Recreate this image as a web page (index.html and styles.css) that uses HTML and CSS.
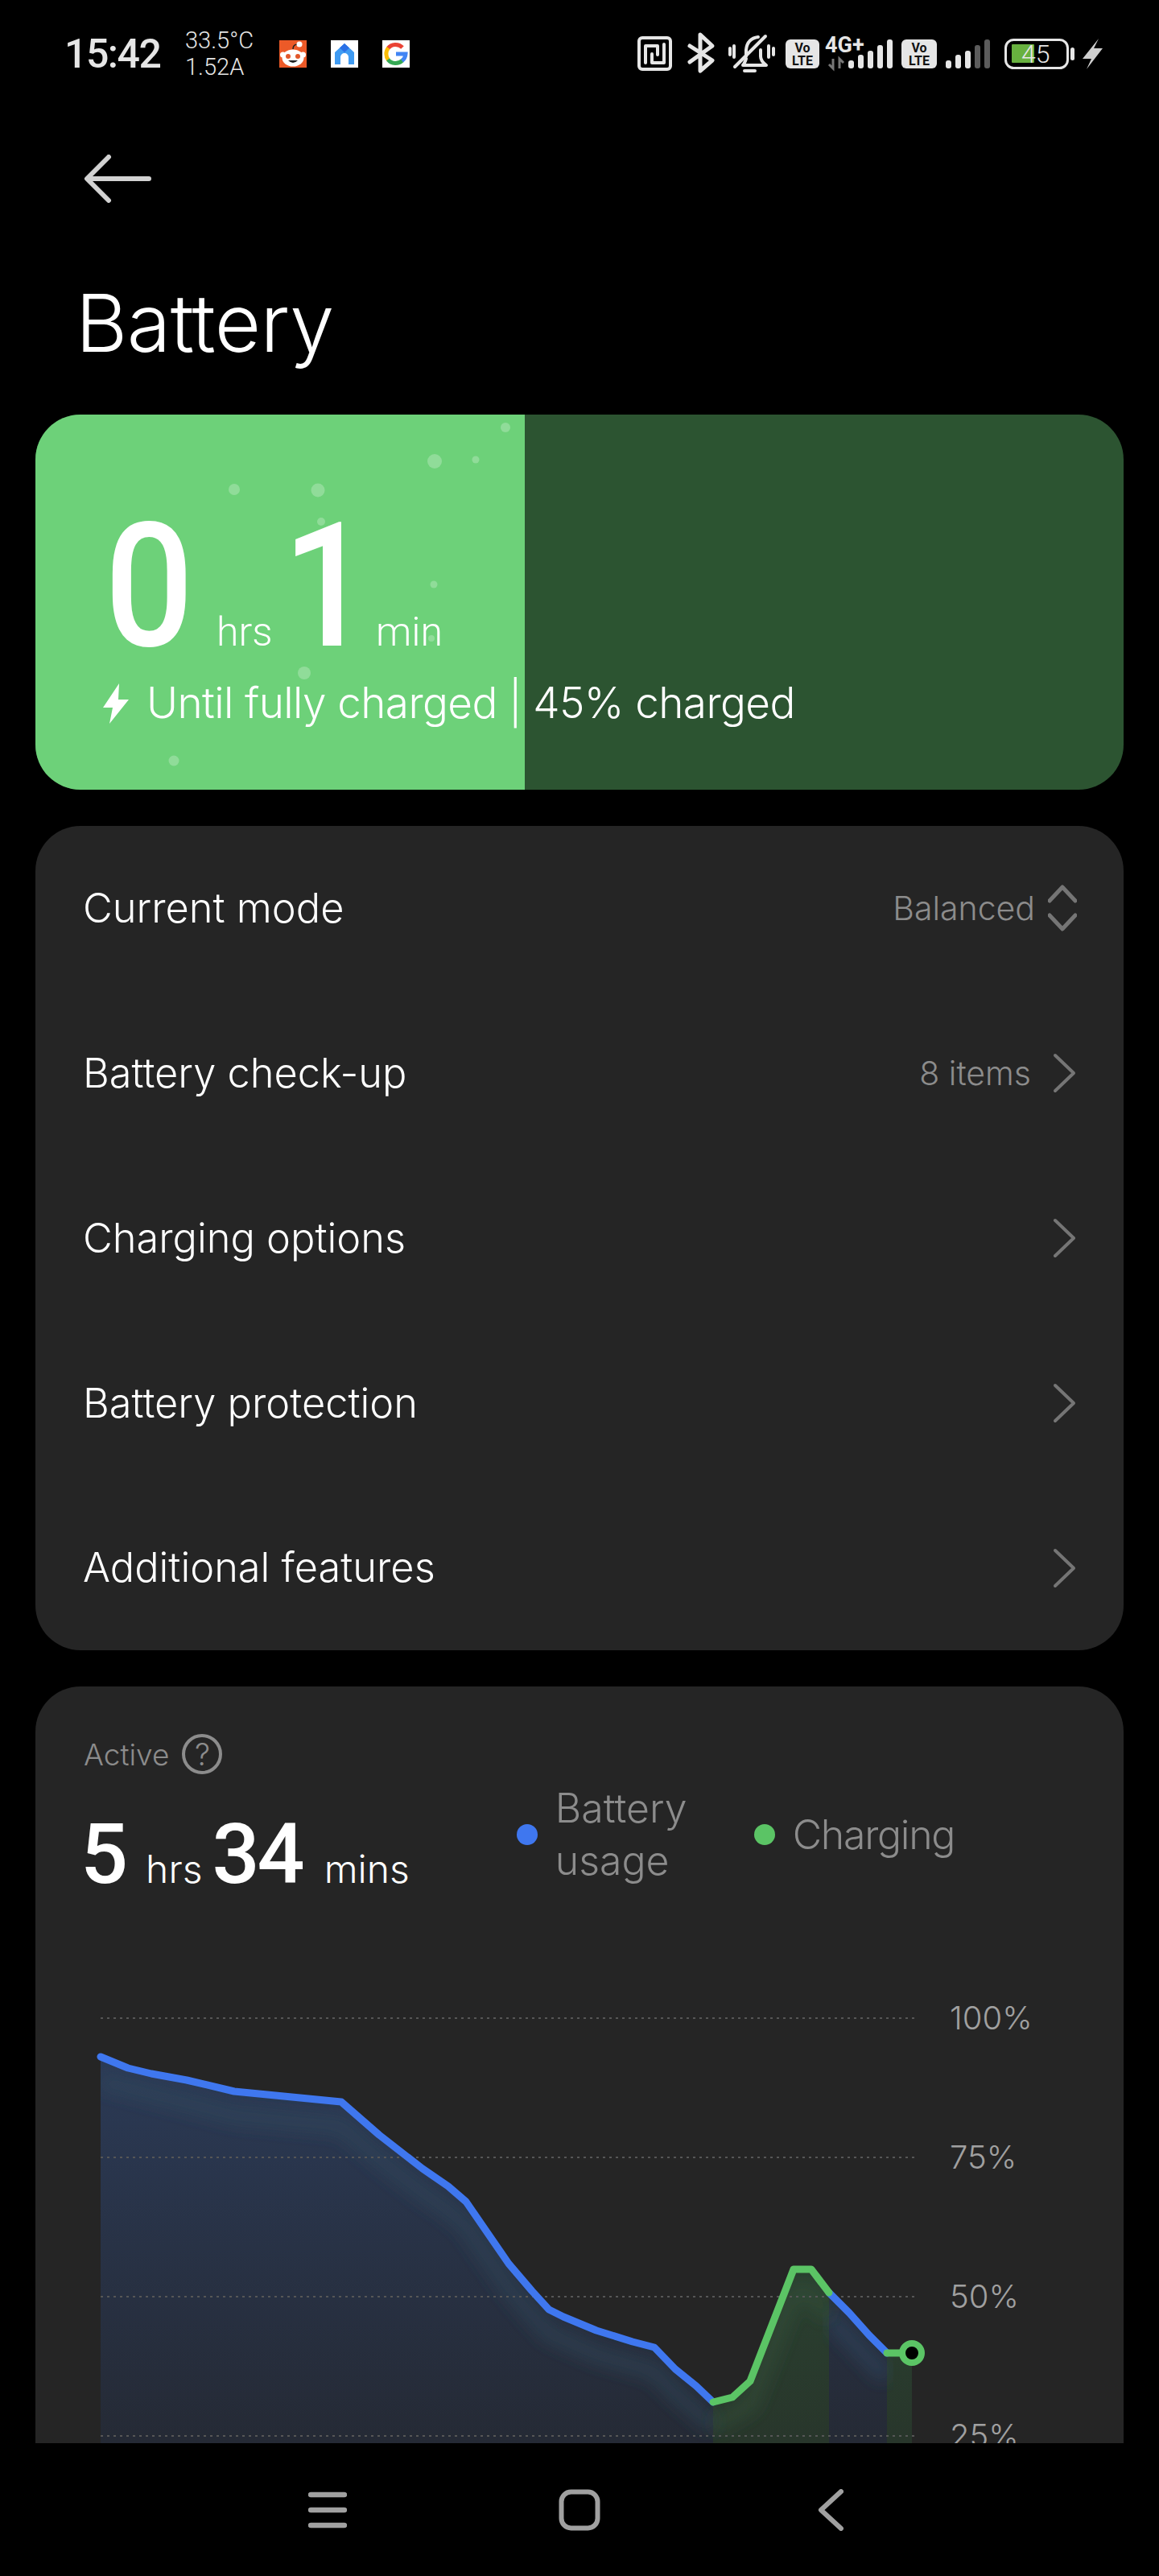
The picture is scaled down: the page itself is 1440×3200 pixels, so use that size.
FILE: index.html
```html
<!DOCTYPE html>
<html lang="en">
<head>
<meta charset="utf-8">
<title>Battery</title>
<link rel="stylesheet" href="styles.css">
</head>
<body>
<div class="screen">
  <div class="content">
    <header class="status">
      <div class="status-left">
        <span class="clock">15:42</span>
        <div class="meter"><span>33.5°C</span><span>1.52A</span></div>
        <div class="apps">
          <svg class="app" viewBox="0 0 34 34"><rect width="34" height="34" fill="#ec5a28"/><ellipse cx="17" cy="22" rx="13.500" ry="10.500" fill="#fff"/><circle cx="4.500" cy="18" r="3.500" fill="#fff"/><circle cx="29.500" cy="18" r="3.500" fill="#fff"/><circle cx="11" cy="20" r="3" fill="#e2582b"/><circle cx="23" cy="20" r="3" fill="#e2582b"/><path d="M11 25q6 6 12 0z" fill="#222"/><path d="M17 11q0-6 6-6" fill="none" stroke="#222" stroke-width="1.500"/><circle cx="25" cy="5" r="3.500" fill="#fff"/></svg>
          <svg class="app" viewBox="0 0 34 34"><rect width="34" height="34" fill="#fff"/><path d="M17 4L29 15V30H22V21a5 5 0 0 0-10 0V30H5V15z" fill="#3f9bf2"/><path d="M17 4L23 9.500 17 15 11 9.500z" fill="#2a70e6"/></svg>
          <svg class="app" viewBox="0 0 34 34"><rect width="34" height="34" fill="#fff"/><path d="M25 9A12 12 0 0 0 7 10" fill="none" stroke="#ea4335" stroke-width="5"/><path d="M7.500 9.500A12 12 0 0 0 7.500 24.500" fill="none" stroke="#fbbc05" stroke-width="5"/><path d="M7 24A12 12 0 0 0 25 25" fill="none" stroke="#34a853" stroke-width="5"/><path d="M24.500 25.500A12 12 0 0 0 29 17H17" fill="none" stroke="#4285f4" stroke-width="5"/></svg>
        </div>
      </div>
      <svg class="status-right" viewBox="0 0 600 60">
        <g fill="none" stroke="#e6e6e6" stroke-width="4" stroke-linejoin="round" stroke-linecap="round">
          <rect x="6" y="10" width="39" height="39" rx="4"/>
          <path d="M14 41V20H29V31M37 18V41H22V30"/>
          <path stroke-width="5" d="M69 20L97 38 82 51V6L97 20 69 40"/>
          <path d="M125 46L163 8"/>
          <path d="M139 33V25C140 15 146 10 154 9M157 25V33C157 38 160 41 164 44H135C137 42 138 39 139 36"/>
          <path d="M137 51H150M119 23V31M124 20V34M167 20V34M173 23V31"/>
        </g>
        <rect x="188" y="12" width="42" height="36" rx="6" fill="#e6e6e6"/>
        <text class="vo" x="209" y="28">Vo</text><text class="vo" x="209" y="44">LTE</text>
        <text class="net" x="237" y="28">4G+</text>
        <path d="M247 36v12l-5-5M255 48V36l5 5" fill="none" stroke="#777" stroke-width="3"/>
        <g fill="#e6e6e6"><rect x="266" y="38" width="7" height="10" rx="3"/><rect x="278" y="31" width="7" height="17" rx="3"/><rect x="290" y="26" width="7" height="22" rx="3"/><rect x="302" y="19" width="7" height="29" rx="3"/><rect x="314" y="12" width="7" height="36" rx="3"/></g>
        <rect x="332" y="12" width="44" height="36" rx="6" fill="#e6e6e6"/>
        <text class="vo" x="354" y="28">Vo</text><text class="vo" x="354" y="44">LTE</text>
        <g fill="#e6e6e6"><rect x="387" y="38" width="7" height="10" rx="3"/><rect x="399" y="31" width="7" height="17" rx="3"/><rect x="411" y="26" width="7" height="22" rx="3"/></g>
        <g fill="#5c5c5c"><rect x="423" y="19" width="7" height="29" rx="3"/><rect x="435" y="12" width="7" height="36" rx="3"/></g>
        <rect x="461.500" y="12.500" width="77" height="35" rx="10" fill="none" stroke="#e6e6e6" stroke-width="3"/>
        <rect x="469" y="18" width="28" height="23" rx="1" fill="#68b13f"/>
        <text class="batt" x="481" y="41">45</text>
        <rect x="542" y="22" width="5" height="16" rx="2.500" fill="#e6e6e6"/>
        <path d="M577 11L557 36h11l-6 13 20-26h-11z" fill="#cfcfcf"/>
      </svg>
    </header>

    <button class="back" type="button" aria-label="Back">
      <svg viewBox="0 0 84 60" class="back-icon"><path d="M81 30H5M31 3L4 30l27 27" fill="none" stroke="#d2d2d2" stroke-width="6" stroke-linecap="round" stroke-linejoin="round"/></svg>
    </button>

    <h1 class="title">Battery</h1>

    <section class="hero">
      <div class="hero-fill"></div>
      <svg class="bubbles" viewBox="0 0 608 466">
        <g fill="#fff" fill-opacity=".24"><circle cx="584" cy="16" r="6"/><circle cx="496" cy="58" r="9"/><circle cx="547" cy="56" r="4.500"/><circle cx="247" cy="93" r="7"/><circle cx="351" cy="94" r="8.500"/><circle cx="355" cy="133" r="5"/><circle cx="495" cy="211" r="4.500"/><circle cx="492" cy="278" r="4"/><circle cx="334" cy="321" r="8"/><circle cx="172" cy="430" r="6.500"/></g>
      </svg>
      <div class="hero-body">
        <div class="hero-time">
          <span class="hero-num">0</span><span class="hero-unit hero-unit-hrs">hrs</span><span class="hero-num hero-num-one">1</span><span class="hero-unit">min</span>
        </div>
        <div class="hero-note">
          <svg class="bolt" viewBox="0 0 32 50"><path d="M20 0L0 30h12L8 50 32 20H19z" fill="#fff"/></svg>
          <span>Until fully charged | 45% charged</span>
        </div>
      </div>
    </section>

    <section class="card menu">
      <div class="row row-mode"><span class="row-label">Current mode</span><span class="row-value">Balanced</span>
        <svg class="updown" viewBox="0 0 36 58"><path d="M2 20L18 3l16 17M2 38l16 17 16-17" fill="none" stroke="#757575" stroke-width="5" stroke-linecap="round" stroke-linejoin="round"/></svg></div>
      <div class="row"><span class="row-label">Battery check-up</span><span class="row-value">8 items</span>
        <svg class="chev" viewBox="0 0 30 50"><path d="M3 3l23 22L3 47" fill="none" stroke="#757575" stroke-width="4" stroke-linecap="round" stroke-linejoin="round"/></svg></div>
      <div class="row"><span class="row-label">Charging options</span>
        <svg class="chev" viewBox="0 0 30 50"><path d="M3 3l23 22L3 47" fill="none" stroke="#757575" stroke-width="4" stroke-linecap="round" stroke-linejoin="round"/></svg></div>
      <div class="row"><span class="row-label">Battery protection</span>
        <svg class="chev" viewBox="0 0 30 50"><path d="M3 3l23 22L3 47" fill="none" stroke="#757575" stroke-width="4" stroke-linecap="round" stroke-linejoin="round"/></svg></div>
      <div class="row"><span class="row-label">Additional features</span>
        <svg class="chev" viewBox="0 0 30 50"><path d="M3 3l23 22L3 47" fill="none" stroke="#757575" stroke-width="4" stroke-linecap="round" stroke-linejoin="round"/></svg></div>
    </section>

    <section class="card usage">
      <div class="usage-head">
        <div class="usage-total">
          <div class="active"><span>Active</span><span class="help">?</span></div>
          <div class="duration"><span class="dur-num">5</span><span class="dur-unit dur-hrs">hrs</span><span class="dur-num">34</span><span class="dur-unit dur-mins">mins</span></div>
        </div>
        <div class="legend">
          <div class="legend-item"><i class="dot dot-blue"></i><span class="legend-narrow">Battery usage</span></div>
          <div class="legend-item"><i class="dot dot-green"></i><span class="legend-tight">Charging</span></div>
        </div>
      </div>
      <svg class="chart" viewBox="44 2480 1352 600">
        <defs>
          <linearGradient id="gb" gradientUnits="userSpaceOnUse" x1="0" y1="2550" x2="0" y2="3035"><stop offset="0" stop-color="#2b3a56"/><stop offset="1" stop-color="#252a35"/></linearGradient>
          <linearGradient id="gg" gradientUnits="userSpaceOnUse" x1="0" y1="2820" x2="0" y2="3035"><stop offset="0" stop-color="#2a4030"/><stop offset="1" stop-color="#28362b"/></linearGradient>
          <clipPath id="area"><path d="M125 2555L159 2569 188 2576 232 2584 291 2598 424 2611 471 2652 525 2694 557 2716 579 2735 632 2812 661 2846 682 2869 700 2878 741 2895 786 2909 813 2916 839 2943 865 2964 886 2984 910 2978 932 2958 986 2819 1008 2819 1030 2848 1055 2873 1080 2901 1102 2923 1133 2923V3040H125z"/></clipPath>
          <filter id="soft" x="-10%" y="-30%" width="120%" height="160%"><feGaussianBlur stdDeviation="10"/></filter>
        </defs>
        <g clip-path="url(#area)">
          <rect x="125" y="2540" width="761" height="500" fill="url(#gb)"/>
          <rect x="886" y="2800" width="144" height="240" fill="url(#gg)"/>
          <rect x="1030" y="2800" width="72" height="240" fill="url(#gb)"/>
          <rect x="1102" y="2800" width="31" height="240" fill="url(#gg)"/>
          <path d="M125 2585L291 2628 424 2641 471 2682 525 2724 557 2746 579 2765 632 2842 661 2876 682 2899 741 2925 813 2946 839 2973 886 3014" fill="none" stroke="#2f4a5c" stroke-width="20" stroke-opacity=".5" filter="url(#soft)"/>
          <path d="M1030 2878L1080 2931 1102 2953" fill="none" stroke="#2f4a66" stroke-width="20" stroke-opacity=".5" filter="url(#soft)"/>
          <path d="M886 3014L932 2988 986 2849 1008 2849 1030 2878" fill="none" stroke="#37583f" stroke-width="20" stroke-opacity=".4" filter="url(#soft)"/>
        </g>
        <g class="grid"><path d="M125 2507H1141M125 2680H1141M125 2853H1141M125 3026H1141"/></g>
        <text class="axis" x="1180" y="2521">100%</text>
        <text class="axis" x="1180" y="2694">75%</text>
        <text class="axis" x="1180" y="2867">50%</text>
        <text class="axis" x="1180" y="3040">25%</text>
        <g fill="none" stroke-width="9" stroke-linecap="round" stroke-linejoin="round">
          <path stroke="#3f77ef" d="M125 2555L159 2569 188 2576 232 2584 291 2598 424 2611 471 2652 525 2694 557 2716 579 2735 632 2812 661 2846 682 2869 700 2878 741 2895 786 2909 813 2916 839 2943 865 2964 886 2984"/>
          <path stroke="#3f77ef" d="M1030 2848L1055 2873 1080 2901 1102 2923"/>
          <path stroke="#5bc465" d="M886 2984L910 2978 932 2958 986 2819 1008 2819 1030 2848"/>
          <path stroke="#5bc465" d="M1102 2923H1125"/>
        </g>
        <circle cx="1133" cy="2923" r="12" fill="#000" stroke="#5bc465" stroke-width="8"/>
      </svg>
    </section>
  </div>

  <nav class="navbar">
    <svg class="nav-icon nav-menu" viewBox="0 0 48 46"><path d="M3 4H45M3 23H45M3 42H45" stroke="#a0a0a0" stroke-width="6.500" stroke-linecap="round"/></svg>
    <svg class="nav-icon nav-home" viewBox="0 0 52 52"><rect x="3.500" y="3.500" width="45" height="45" rx="12" fill="none" stroke="#a0a0a0" stroke-width="6"/></svg>
    <svg class="nav-icon nav-back" viewBox="0 0 32 52"><path d="M29 3L4 26l25 23" fill="none" stroke="#a0a0a0" stroke-width="6" stroke-linecap="round" stroke-linejoin="round"/></svg>
  </nav>
</div>
</body>
</html>
```
FILE: styles.css
```css
* { box-sizing: border-box; }
html, body { margin: 0; padding: 0; background: #000; }
body { font-family: "Inter", "Liberation Sans", sans-serif; color: #fff; }
.screen { width: 1440px; height: 3200px; display: flex; flex-direction: column; overflow: hidden; background: #000; }
.content { flex: 1; min-height: 0; overflow: hidden; padding: 0 44px; }

.status { height: 130px; margin: 0 -44px; padding: 0 0 0 80px; display: flex; justify-content: space-between; align-items: flex-start; }
.status-left { display: flex; align-items: center; height: 134px; }
.clock { font: 500 50px/1 "Roboto", sans-serif; letter-spacing: -1.500px; color: #e6e6e6; width: 150px; }
.meter { display: flex; flex-direction: column; font: 300 29px/33px "Roboto", sans-serif; color: #e6e6e6; width: 117px; }
.apps { display: flex; gap: 30px; }
.app { width: 34px; height: 34px; display: block; }
.status-right { width: 600px; height: 60px; margin: 37px 52px 0 0; flex: none; }
.vo { font: 700 16px "Roboto", sans-serif; fill: #111; text-anchor: middle; }
.net { font: 700 27px "Roboto", sans-serif; fill: #e6e6e6; }
.batt { font: 300 32px "Roboto", sans-serif; fill: #e6e6e6; }

.back { display: block; width: 90px; height: 70px; margin: 57px 0 0 60px; padding: 0; border: 0; background: none; }
.back-icon { width: 84px; height: 60px; display: block; }
.title { margin: 95px 0 0 50px; font: 300 99px/1 "Inter", sans-serif; height: 90px; letter-spacing: -.5px; }

.hero { position: relative; height: 466px; margin-top: 73px; border-radius: 56px; background: #2c5431; overflow: hidden; }
.hero-fill { position: absolute; left: 0; top: 0; bottom: 0; width: 608px; background: #6dd179; }
.bubbles { position: absolute; left: 0; top: 0; width: 608px; height: 466px; }
.hero-body { position: relative; padding: 129px 0 0 86px; }
.hero-time { display: flex; align-items: baseline; height: 170px; }
.hero-num { font: 500 216px/170px "Roboto", sans-serif; display: inline-block; transform: scaleX(.9); transform-origin: left; width: 139px; }
.hero-num-one { width: 116px; }
.hero-unit { font: 300 50px/1 "Roboto", sans-serif; width: 90px; }
.hero-unit-hrs { width: 82px; }
.hero-note { display: flex; align-items: center; margin: 33px 0 0 -2px; font: 300 53px/1 "Inter", sans-serif; letter-spacing: -.6px; }
.bolt { width: 32px; height: 50px; margin-right: 22px; }

.card { background: #252525; border-radius: 56px; }
.menu { margin-top: 45px; height: 1024px; padding: 0 58px 0 59px; display: flex; flex-direction: column; }
.row { flex: 1; display: flex; align-items: center; gap: 27px; }
.row-mode { gap: 16px; }
.row-label { flex: 1; font: 350 50.500px/1 "Inter", sans-serif; }
.row-value { font: 300 41px/1 "Inter", sans-serif; color: #8c8c8c; }
.updown { width: 36px; height: 58px; }
.chev { width: 30px; height: 50px; }

.usage { margin-top: 45px; height: 1200px; position: relative; }
.usage-head { display: flex; height: 385px; padding: 59px 0 0 60px; }
.active { display: flex; align-items: center; gap: 16px; font: 300 37px/1 "Inter", sans-serif; color: #8c8c8c; }
.help { width: 50px; height: 50px; border: 4px solid #8c8c8c; border-radius: 50%; display: flex; align-items: center; justify-content: center; font-size: 38px; }
.duration { display: flex; align-items: baseline; margin: 48px 0 0 -4px; }
.dur-num { font: 500 104px/1 "Roboto", sans-serif; letter-spacing: -3px; }
.dur-unit { font: 300 48px/1 "Inter", sans-serif; }
.dur-hrs { margin: 0 12px 0 25px; }
.dur-mins { margin-left: 27px; }
.legend { display: flex; align-items: center; height: 130px; margin: 60px 0 0 133px; gap: 67px; color: #8c8c8c; font: 300 50px/65px "Inter", sans-serif; }
.legend-item { display: flex; align-items: center; gap: 22px; }
.legend-narrow { width: 180px; }
.legend-tight { letter-spacing: -1.300px; }
.dot { width: 26px; height: 26px; border-radius: 50%; flex: none; }
.dot-blue { background: #3f77ef; }
.dot-green { background: #5bc465; }

.chart { position: absolute; left: 0; top: 385px; width: 1352px; height: 600px; display: block; }
.grid path { stroke: #565656; stroke-width: 2; stroke-dasharray: 3 5; fill: none; }
.axis { font: 300 40px "Inter", sans-serif; fill: #a0a0a0; }

.navbar { height: 165px; flex: none; display: flex; background: #000; position: relative; }
.nav-icon { position: absolute; top: 57px; }
.nav-menu { left: 383px; width: 48px; height: 46px; top: 60px; }
.nav-home { left: 694px; width: 52px; height: 52px; }
.nav-back { left: 1016px; width: 32px; height: 52px; }
```
